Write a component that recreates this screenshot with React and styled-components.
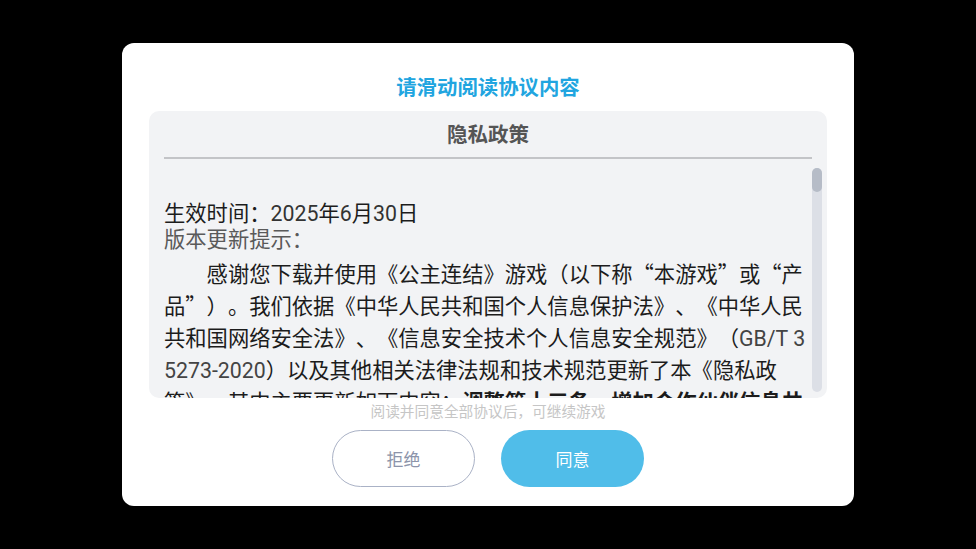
import React from 'react';
import styled, { createGlobalStyle } from 'styled-components';

const GlobalStyle = createGlobalStyle`
    * {
        box-sizing: border-box;
    }
    html, body {
        margin: 0;
        padding: 0;
        background: #000;
    }
    body {
        font-family: "Noto Sans CJK SC", "Noto Sans", sans-serif;
        text-spacing-trim: space-all;
    }
`;

const Screen = styled.div`
    width: 100vw;
    height: 100vh;
    display: flex;
    align-items: center;
    justify-content: center;
    background: #000;
`;

const Dialog = styled.section`
    width: 732px;
    height: 463px;
    background: #fff;
    border-radius: 12px;
    padding: 29px 27px 19px;
    display: flex;
    flex-direction: column;
    align-items: center;
`;

const Title = styled.h2`
    margin: 0 0 11px;
    font-size: 20.4px;
    line-height: 28px;
    font-weight: 700;
    color: #21a5e0;
`;

const Panel = styled.div`
    width: 100%;
    height: 287px;
    background: #f2f3f5;
    border-radius: 10px;
    display: flex;
    flex-direction: column;
    overflow: hidden;
`;

const PanelHead = styled.h3`
    margin: 0 15px;
    padding: 8px 0 10px;
    font-size: 20.5px;
    line-height: 28px;
    font-weight: 700;
    color: #555;
    text-align: center;
    border-bottom: 2px solid #c3c4c7;
`;

const Body = styled.div`
    flex: 1;
    display: flex;
    min-height: 0;
`;

const Text = styled.div`
    width: 662px;
    padding: 40px 0 0 15px;
    overflow: hidden;
    color: #1c1c1c;
    font-size: 21.3px;
    word-break: break-all;
`;

const Meta = styled.p`
    margin: 0;
    line-height: 26px;
    color: ${p => (p.$muted ? '#5a5a5a' : '#1c1c1c')};
`;

const Para = styled.p`
    margin: 6px 0 0;
    line-height: 32px;
    text-indent: 2em;
`;

const Latin = styled.span`
    font-family: Roboto, "Noto Sans CJK SC", sans-serif;
    line-height: 1;
    color: ${p => p.$color || 'inherit'};
`;

const Track = styled.div`
    width: 10px;
    margin: 9px 0 6px 1px;
    border-radius: 5px;
    background: #dcdfe6;
`;

const Thumb = styled.div`
    height: 24px;
    border-radius: 5px;
    background: #b6bcc7;
`;

const Hint = styled.p`
    margin: 4px 0 0;
    font-size: 14.7px;
    line-height: 18px;
    color: #c6c6c6;
`;

const Actions = styled.div`
    margin-top: 10px;
    display: flex;
    gap: 26px;
`;

const Button = styled.button`
    width: 143px;
    height: 57px;
    border-radius: 29px;
    font-family: "Noto Sans CJK SC", sans-serif;
    font-size: 17px;
    cursor: pointer;
    border: ${p => (p.$primary ? 'none' : '1.5px solid #aab2c6')};
    background: ${p => (p.$primary ? '#50bde9' : '#fff')};
    color: ${p => (p.$primary ? '#fff' : '#8c94aa')};
`;

export default function App() {
    return (
        <>
            <GlobalStyle />
            <Screen>
                <Dialog>
                    <Title>请滑动阅读协议内容</Title>
                    <Panel>
                        <PanelHead>隐私政策</PanelHead>
                        <Body>
                            <Text>
                                <Meta>生效时间：<Latin $color="#333">2025</Latin>年<Latin $color="#333">6</Latin>月<Latin $color="#333">30</Latin>日</Meta>
                                <Meta $muted>版本更新提示：</Meta>
                                <Para>
                                    感谢您下载并使用《公主连结》游戏（以下称“本游戏”或“产品”）。我们依据《中华人民共和国个人信息保护法》、《中华人民共和国网络安全法》、《信息安全技术个人信息安全规范》（<Latin $color="#444">GB/T 35273-2020</Latin>）以及其他相关法律法规和技术规范更新了本《隐私政策》。其中主要更新如下内容：<strong>调整第十三条，增加合作伙伴信息共享清单</strong>，以便您更清晰地了解我们如何处理您的个人信息。
                                </Para>
                            </Text>
                            <Track>
                                <Thumb />
                            </Track>
                        </Body>
                    </Panel>
                    <Hint>阅读并同意全部协议后，可继续游戏</Hint>
                    <Actions>
                        <Button>拒绝</Button>
                        <Button $primary>同意</Button>
                    </Actions>
                </Dialog>
            </Screen>
        </>
    );
}
